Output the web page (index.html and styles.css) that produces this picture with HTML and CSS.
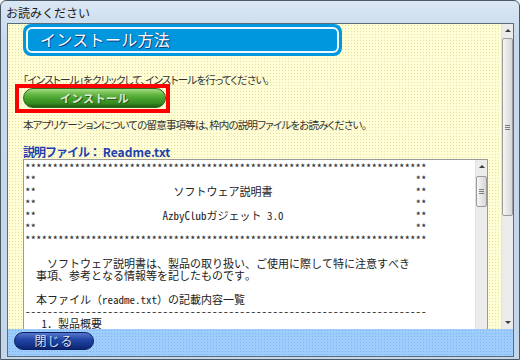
FILE: index.html
```html
<!DOCTYPE html>
<html lang="ja">
<head>
  <meta charset="UTF-8">
  <meta name="viewport" content="width=device-width, initial-scale=1.0">
  <title>お読みください</title>
  <link rel="stylesheet" href="styles.css">
</head>
<body>
<div class="window">
  <div class="titlebar">お読みください</div>
  <div class="client">
    <div class="content">
      <div class="main">
        <div class="banner">
          <div class="banner-inner">インストール方法</div>
        </div>
        <p class="note first">「インストール」をクリックして、インストールを行ってください。</p>
        <div class="install-wrap">
          <button class="install-button">インストール</button>
          <span class="highlight"></span>
        </div>
        <p class="note second">本アプリケーションについての留意事項等は、枠内の説明ファイルをお読みください。</p>
        <h2 class="file-title"><span class="jp">説明ファイル：</span> Readme.txt</h2>
        <div class="textbox">
<pre class="readme">*************************************************************************
**                                                                     **
**                         ソフトウェア説明書                          **
**                                                                     **
**                       AzbyClubガジェット 3.0                        **
**                                                                     **
*************************************************************************

　　ソフトウェア説明書は、製品の取り扱い、ご使用に際して特に注意すべき
　事項、参考となる情報等を記したものです。

　本ファイル（readme.txt）の記載内容一覧
-------------------------------------------------------------------------
   1．製品概要</pre>
          <div class="scrollbar small">
            <div class="arrow up"></div>
            <div class="thumb"><span class="grip"></span></div>
          </div>
        </div>
      </div>
      <div class="scrollbar outer">
        <div class="arrow up"></div>
        <div class="thumb"><span class="grip"></span></div>
        <div class="track"></div>
        <div class="arrow down"></div>
      </div>
    </div>
    <div class="footer">
      <button class="close-button">閉じる</button>
    </div>
  </div>
</div>
</body>
</html>
```

FILE: styles.css
```css
* {
  box-sizing: border-box;
}

html, body {
  margin: 0;
  padding: 0;
}

body {
  width: 520px;
  height: 360px;
  overflow: hidden;
  font-family: 'Noto Sans CJK JP', sans-serif;
  color: #333;
}

.window {
  width: 520px;
  height: 360px;
  border: 1px solid #4b5866;
  border-radius: 6px 6px 0 0;
  background: linear-gradient(#dae7f4, #c7d9ec 40px, #c4d6ea);
  padding: 0 5px 2px 6px;
  display: flex;
  flex-direction: column;
}

.titlebar {
  flex: none;
  height: 22px;
  line-height: 23px;
  font-size: 12px;
  color: #1b1b1b;
  margin-left: -1px;
}

.client {
  flex: 1;
  display: flex;
  flex-direction: column;
  border: 1px solid #5e6c7a;
  overflow: hidden;
}

.content {
  flex: none;
  height: 305px;
  display: flex;
  background-color: #fffed6;
  background-image: radial-gradient(circle, #e6e09c 0.7px, transparent 0.8px);
  background-size: 3px 3px;
}

.main {
  flex: 1;
  padding-left: 15px;
  overflow: hidden;
}

/* title banner */
.banner {
  width: 319px;
  height: 32px;
  padding: 3px;
  border-radius: 8px;
  background: #0097de;
}

.banner-inner {
  height: 26px;
  border: 2px solid #eef8ff;
  border-radius: 6px;
  padding-left: 12px;
  font-size: 16px;
  line-height: 21px;
  color: #fff;
  text-shadow: 1px 1px 0 #0b3f86, 0 0 1px #0b3f86;
  letter-spacing: 0.3px;
}

.note {
  margin: 0;
  font-size: 10.5px;
  line-height: 14px;
  letter-spacing: -0.8px;
  color: #333;
  font-feature-settings: "palt";
  white-space: nowrap;
}

.note.first {
  margin-top: 17px;
}

.note.second {
  margin-top: 10px;
}

.install-wrap {
  position: relative;
  width: 143px;
  height: 20px;
  margin-top: 1px;
}

.install-button {
  display: block;
  width: 143px;
  height: 20px;
  padding: 0;
  border: 1px solid #2c651c;
  border-radius: 10px;
  background: linear-gradient(#a3dc83 0%, #66b743 30%, #46a02c 55%, #358a20 80%, #1f5c12 100%);
  font-family: 'Noto Sans CJK JP', sans-serif;
  font-size: 11px;
  font-weight: bold;
  line-height: 17px;
  color: #dfe8d8;
  text-shadow: 1px 1px 0 #2b5c1d;
  letter-spacing: 0.5px;
}

/* red annotation frame over the button */
.highlight {
  position: absolute;
  left: -8px;
  top: -4px;
  width: 155px;
  height: 29px;
  border: 4px solid #ff0000;
}

.file-title {
  margin: 12px 0 0;
  font-size: 12px;
  line-height: 15px;
  font-weight: bold;
  color: #1f3fae;
}

.file-title .jp {
  letter-spacing: -1px;
}

.textbox {
  display: flex;
  width: 465px;
  height: 172px;
  border: 1px solid #9a9a9a;
  background: #fff;
}

.readme {
  flex: 1;
  margin: 0;
  padding: 1px 0 0 1px;
  font-family: 'Noto Sans Mono CJK JP', 'Liberation Mono', monospace;
  font-size: 11px;
  line-height: 12px;
  color: #222;
  white-space: pre;
  overflow: hidden;
}

/* scrollbars */
.scrollbar {
  flex: none;
  width: 12px;
  display: flex;
  flex-direction: column;
  background: #ebebeb;
  border-left: 1px solid #e2e2e2;
}

.arrow {
  flex: none;
  height: 13px;
  display: flex;
  align-items: center;
  justify-content: center;
}

.arrow::before {
  content: "";
  border-left: 3px solid transparent;
  border-right: 3px solid transparent;
}

.arrow.up::before {
  border-bottom: 3px solid #3a3a3a;
}

.arrow.down::before {
  border-top: 3px solid #3a3a3a;
}

.thumb {
  flex: none;
  display: flex;
  align-items: center;
  justify-content: center;
  margin: 1px 0 0 0;
  border: 1px solid #9b9b9b;
  border-radius: 2px;
  background: linear-gradient(90deg, #f6f6f6, #e6e6e6 50%, #d6d6d6);
}

.grip {
  width: 5px;
  height: 5px;
  background: repeating-linear-gradient(#7a7a7a 0 1px, transparent 1px 2px);
}

.outer .thumb {
  height: 178px;
}

.small .thumb {
  height: 31px;
  margin-top: 3px;
}

.track {
  flex: 1;
}

.footer {
  flex: 1;
  padding: 3px 0 0 6px;
  background-color: #9ccdfd;
  background-image: radial-gradient(circle, #84b3e8 0.7px, transparent 0.8px);
  background-size: 3px 3px;
}

.close-button {
  display: block;
  width: 80px;
  height: 18px;
  padding: 0;
  border: 1px solid #0b1f66;
  border-radius: 9px;
  background: linear-gradient(#5676cc 0%, #2446a6 40%, #15348a 75%, #0d2370 100%);
  font-family: 'Noto Sans CJK JP', sans-serif;
  font-size: 12px;
  line-height: 16px;
  color: #d8e2f4;
  text-shadow: 1px 1px 0 #0a1a55;
  letter-spacing: 1px;
}
```
